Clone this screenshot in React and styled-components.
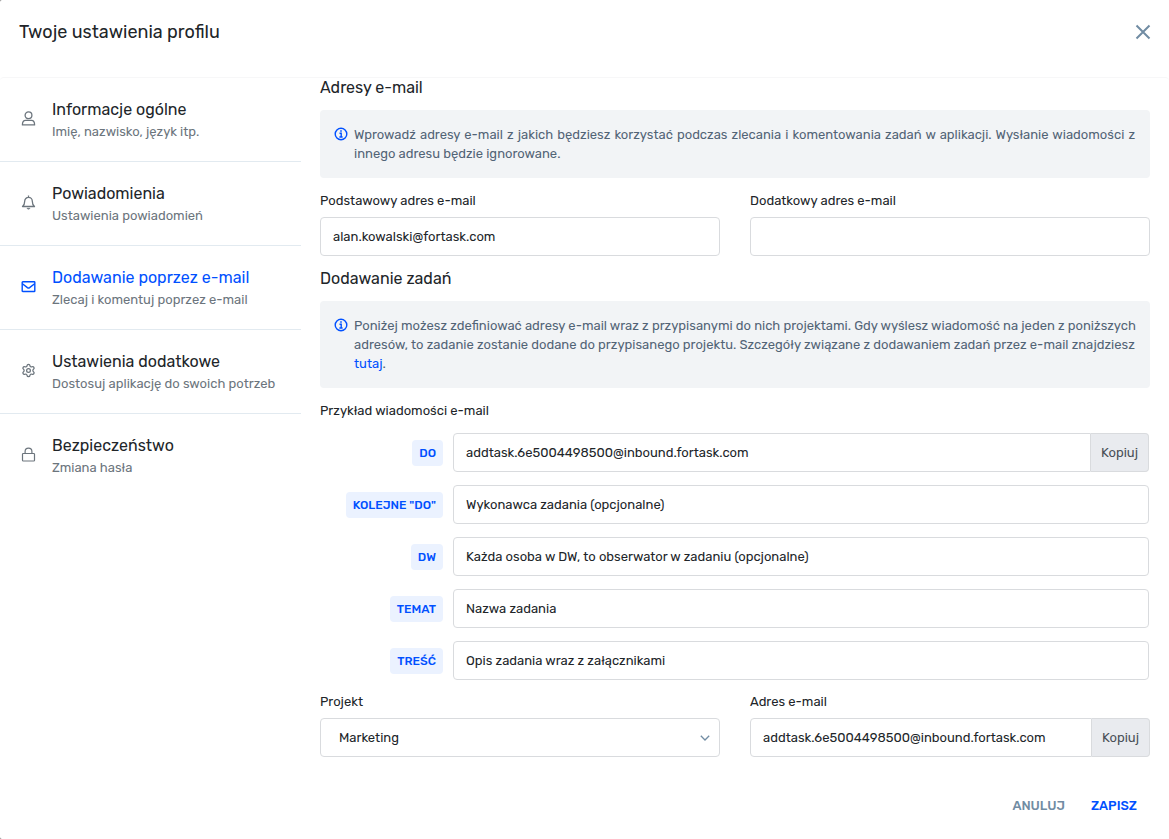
import React, { useState } from 'react'
import styled, { createGlobalStyle } from 'styled-components'
import { Settings } from 'lucide-react'

const UserIcon = () => (
    <svg width="15" height="15" viewBox="0 0 15 15" fill="none" stroke="currentColor" strokeWidth="1.3">
        <circle cx="7.5" cy="4.3" r="3.4" />
        <path d="M4.6 9.3h5.8c1.9 0 3.2 1.6 3.2 4.6H1.4c0-3 1.3-4.6 3.2-4.6Z" strokeLinejoin="round" />
    </svg>
)

const BellIcon = () => (
    <svg width="15" height="15" viewBox="0 0 15 15" fill="none" stroke="currentColor" strokeWidth="1.3" strokeLinejoin="round">
        <path d="M7.5.5v1.6M3.7 6.2a3.8 3.8 0 0 1 7.6 0c0 2.6.7 4.1 2.2 5.3h-12c1.5-1.2 2.2-2.7 2.2-5.3Z" />
        <path d="M6 13.3h3c-.3.6-.8.9-1.5.9s-1.2-.3-1.5-.9Z" fill="currentColor" strokeWidth=".6" />
    </svg>
)

const MailIcon = () => (
    <svg width="15" height="15" viewBox="0 0 15 15" fill="none" stroke="currentColor" strokeWidth="1.4">
        <rect x="1.2" y="2.7" width="12.6" height="9.8" rx=".6" />
        <path d="m1.4 4.8 5 3.8c.7.5 1.5.5 2.2 0l5-3.8" />
    </svg>
)

const LockIcon = () => (
    <svg width="15" height="15" viewBox="0 0 15 15" fill="none" stroke="currentColor" strokeWidth="1.2">
        <rect x="1.5" y="6.5" width="12" height="7.5" rx=".8" />
        <path d="M4.1 6.5V4.6a3.4 3.4 0 0 1 6.8 0v1.9" />
    </svg>
)

const InfoIcon = () => (
    <svg width="14" height="14" viewBox="0 0 14 14" fill="none" stroke="currentColor" strokeWidth="1.4">
        <circle cx="7" cy="7" r="5.8" />
        <path d="M5.5 6.3h1.7v3.6M5.4 10h3.2" />
        <path d="M6.2 4h1.6" strokeWidth="1.6" />
    </svg>
)

const menu = [
    { id: 'general', title: 'Informacje ogólne', text: 'Imię, nazwisko, język itp.', icon: <UserIcon /> },
    { id: 'notifications', title: 'Powiadomienia', text: 'Ustawienia powiadomień', icon: <BellIcon /> },
    { id: 'email', title: 'Dodawanie poprzez e-mail', text: 'Zlecaj i komentuj poprzez e-mail', icon: <MailIcon /> },
    { id: 'extra', title: 'Ustawienia dodatkowe', text: 'Dostosuj aplikację do swoich potrzeb', icon: <Settings size={15} /> },
    { id: 'security', title: 'Bezpieczeństwo', text: 'Zmiana hasła', icon: <LockIcon /> },
]

const inbound = 'addtask.6e5004498500@inbound.fortask.com'

const example = [
    { id: 'to', label: 'DO', value: inbound, copy: true },
    { id: 'next-to', label: 'KOLEJNE "DO"', value: 'Wykonawca zadania (opcjonalne)' },
    { id: 'cc', label: 'DW', value: 'Każda osoba w DW, to obserwator w zadaniu (opcjonalne)' },
    { id: 'subject', label: 'TEMAT', value: 'Nazwa zadania' },
    { id: 'body', label: 'TREŚĆ', value: 'Opis zadania wraz z załącznikami' },
]

const copyText = (value) => navigator.clipboard?.writeText(value)

export default function App() {
    const [active, setActive] = useState('email')
    const [email, setEmail] = useState('alan.kowalski@fortask.com')
    const [extraEmail, setExtraEmail] = useState('')

    return (
        <>
            <GlobalStyle />
            <Modal>
                <Header>
                    <Title>Twoje ustawienia profilu</Title>
                    <CloseButton type="button" aria-label="Zamknij">
                        <svg width="16" height="16" viewBox="0 0 16 16" stroke="currentColor" strokeWidth="2">
                            <path d="m1.5 1.5 13 13M14.5 1.5l-13 13" />
                        </svg>
                    </CloseButton>
                </Header>
                <Body>
                    <Sidebar>
                        {menu.map((item) => (
                            <MenuItem
                                key={item.id}
                                type="button"
                                $active={item.id === active}
                                onClick={() => setActive(item.id)}
                            >
                                {item.icon}
                                <span>
                                    <MenuTitle>{item.title}</MenuTitle>
                                    <MenuText>{item.text}</MenuText>
                                </span>
                            </MenuItem>
                        ))}
                    </Sidebar>
                    <Content>
                        <Heading>Adresy e-mail</Heading>
                        <Alert $justify>
                            <InfoIcon />
                            <p>
                                Wprowadź adresy e-mail z jakich będziesz korzystać podczas zlecania i komentowania
                                zadań w aplikacji. Wysłanie wiadomości z innego adresu będzie ignorowane.
                            </p>
                        </Alert>
                        <Columns>
                            <Field>
                                <label htmlFor="email">Podstawowy adres e-mail</label>
                                <Input id="email" value={email} onChange={(e) => setEmail(e.target.value)} />
                            </Field>
                            <Field>
                                <label htmlFor="extra-email">Dodatkowy adres e-mail</label>
                                <Input id="extra-email" value={extraEmail} onChange={(e) => setExtraEmail(e.target.value)} />
                            </Field>
                        </Columns>

                        <Heading $spaced>Dodawanie zadań</Heading>
                        <Alert>
                            <InfoIcon />
                            <p>
                                Poniżej możesz zdefiniować adresy e-mail wraz z przypisanymi do nich projektami. Gdy
                                wyślesz wiadomość na jeden z poniższych adresów, to zadanie zostanie dodane do
                                przypisanego projektu. Szczegóły związane z dodawaniem zadań przez e-mail
                                znajdziesz <a href="#tutaj">tutaj</a>.
                            </p>
                        </Alert>
                        <Subheading>Przykład wiadomości e-mail</Subheading>
                        <Example>
                            {example.map((row) => (
                                <ExampleRow key={row.id}>
                                    <Badge htmlFor={row.id}>{row.label}</Badge>
                                    <InputGroup>
                                        <Input id={row.id} value={row.value} readOnly $joined={row.copy} />
                                        {row.copy && (
                                            <CopyButton type="button" onClick={() => copyText(row.value)}>Kopiuj</CopyButton>
                                        )}
                                    </InputGroup>
                                </ExampleRow>
                            ))}
                        </Example>
                        <Columns>
                            <Field>
                                <label htmlFor="project">Projekt</label>
                                <SelectBox>
                                    <Select id="project" defaultValue="marketing">
                                        <option value="marketing">Marketing</option>
                                    </Select>
                                    <svg width="10" height="6" viewBox="0 0 10 6" fill="none" stroke="currentColor" strokeWidth="1.3">
                                        <path d="m.8.8 4.2 4.2L9.2.8" />
                                    </svg>
                                </SelectBox>
                            </Field>
                            <Field>
                                <label htmlFor="address">Adres e-mail</label>
                                <InputGroup>
                                    <Input id="address" value={inbound} readOnly $joined />
                                    <CopyButton type="button" onClick={() => copyText(inbound)}>Kopiuj</CopyButton>
                                </InputGroup>
                            </Field>
                        </Columns>
                    </Content>
                </Body>
                <Footer>
                    <FooterButton type="button">ANULUJ</FooterButton>
                    <FooterButton type="button" $primary>ZAPISZ</FooterButton>
                </Footer>
            </Modal>
        </>
    )
}

const GlobalStyle = createGlobalStyle`
    * {
        box-sizing: border-box;
    }
    body {
        margin: 0;
        background: #808080;
        color: #212529;
        font: 13px/20px Rubik, Inter, sans-serif;
    }
    h1, h2, h3, p {
        margin: 0;
        font-weight: 400;
    }
    button, input, select {
        font: inherit;
        color: inherit;
    }
    button {
        cursor: pointer;
    }
`;

const Modal = styled.div`
    display: flex;
    flex-direction: column;
    min-height: 100vh;
    background: #fff;
    border-radius: 2px 0 0 2px;
`;

const Header = styled.header`
    display: flex;
    justify-content: space-between;
    align-items: flex-start;
    padding: 20px 18px 33px 19px;
`;

const Title = styled.h1`
    font-size: 18px;
    line-height: 24px;
`;

const CloseButton = styled.button`
    display: flex;
    padding: 4px 0;
    border: none;
    background: none;
    color: #718ca3;
`;

const Body = styled.div`
    display: flex;
    border-top: 1px solid #f7f7f8;
    border-radius: 4px 4px 0 0;
`;

const Sidebar = styled.nav`
    flex: 0 0 301px;
`;

const MenuItem = styled.button`
    display: flex;
    align-items: center;
    gap: 16px;
    width: 100%;
    height: 84px;
    padding: 0 21px;
    border: none;
    border-bottom: 1px solid #e2eaf0;
    background: none;
    color: ${({ $active }) => ($active ? '#0050ff' : '#212529')};
    text-align: left;
    white-space: nowrap;
    &:last-child {
        border-bottom-color: transparent;
    }
    svg {
        flex: none;
        margin-bottom: 2px;
        color: ${({ $active }) => ($active ? '#0050ff' : '#6c757d')};
    }
`;

const MenuTitle = styled.span`
    display: block;
    font-size: 16px;
    line-height: 24px;
`;

const MenuText = styled.span`
    display: block;
    color: #6c757d;
`;

const Content = styled.main`
    flex: 1;
    min-width: 0;
    padding: 0 19px;
`;

const Heading = styled.h2`
    margin: ${({ $spaced }) => ($spaced ? '13px 0 12px' : '0 0 12px')};
    font-size: 16px;
`;

const Alert = styled.div`
    display: flex;
    gap: 6px;
    margin-bottom: 13px;
    padding: ${({ $justify }) => ($justify ? '15px 15px 15px 14px' : '15px 8px 15px 14px')};
    border-radius: 4px;
    background: #f2f4f6;
    color: #526476;
    line-height: 19px;
    text-align: ${({ $justify }) => ($justify ? 'justify' : 'left')};
    svg {
        flex: none;
        margin-top: 2px;
        color: #0050ff;
    }
    a {
        color: #0050ff;
        text-decoration: none;
    }
`;

const Columns = styled.div`
    display: grid;
    grid-template-columns: 1fr 1fr;
    gap: 30px;
`;

const Field = styled.div`
    display: flex;
    flex-direction: column;
    gap: 6px;
    min-width: 0;
`;

const Subheading = styled.h3`
    margin-bottom: 12px;
    font-size: 13px;
`;

const Input = styled.input`
    flex: 1;
    min-width: 0;
    height: 39px;
    min-height: 39px;
    padding: 0 12px;
    border: 1px solid #d9dbde;
    border-radius: ${({ $joined }) => ($joined ? '4px 0 0 4px' : '4px')};
    background: #fff;
`;

const InputGroup = styled.div`
    display: flex;
    min-width: 0;
`;

const CopyButton = styled.button`
    padding: 0 10px;
    border: 1px solid #d9dbde;
    border-left: none;
    border-radius: 0 4px 4px 0;
    background: #e9ebef;
    color: #495057;
`;

const Example = styled.div`
    display: grid;
    gap: 13px;
    margin: 0 1px 12px 0;
`;

const ExampleRow = styled.div`
    display: grid;
    grid-template-columns: 123px 1fr;
    align-items: center;
    gap: 10px;
`;

const Badge = styled.label`
    justify-self: end;
    padding: 3px 7px;
    border-radius: 4px;
    background: #ebf2ff;
    color: #0050ff;
    font-size: 12px;
    font-weight: 500;
    white-space: nowrap;
`;

const SelectBox = styled.div`
    display: grid;
    align-items: center;
    svg {
        grid-area: 1 / 1;
        justify-self: end;
        margin-right: 10px;
        color: #718ca3;
        pointer-events: none;
    }
`;

const Select = styled.select`
    grid-area: 1 / 1;
    appearance: none;
    width: 100%;
    height: 39px;
    padding: 0 18px;
    border: 1px solid #d9dbde;
    border-radius: 4px;
    background: #fff;
`;

const Footer = styled.footer`
    display: flex;
    justify-content: flex-end;
    gap: 26px;
    padding: 39px 32px 23px;
`;

const FooterButton = styled.button`
    padding: 0;
    border: none;
    background: none;
    color: ${({ $primary }) => ($primary ? '#0050ff' : '#718ca3')};
    font-weight: 500;
`;
